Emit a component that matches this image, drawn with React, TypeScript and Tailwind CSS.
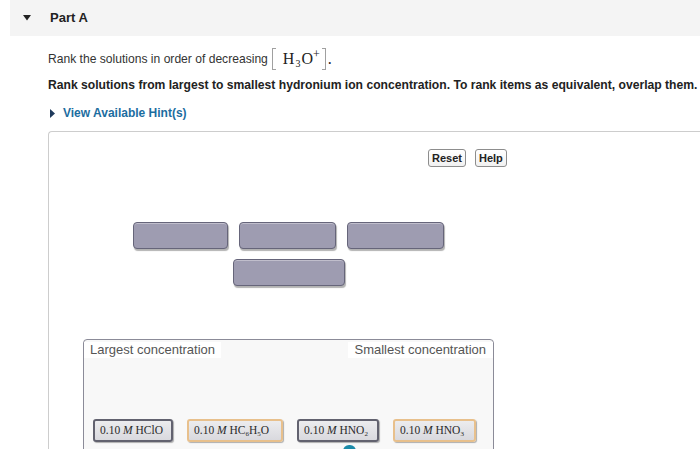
import React from "react";

type Item = { label: React.ReactNode; width: string; tan?: boolean };

const sans = "font-['Liberation_Sans',Arial,sans-serif]";
const serif = "font-['Liberation_Serif','Times_New_Roman',serif]";

function Conc({ formula }: { formula: React.ReactNode }) {
  return (
    <span>
      0.10 <i>M</i> {formula}
    </span>
  );
}

const items: Item[] = [
  { label: <Conc formula="HClO" />, width: "w-[80px]" },
  {
    label: (
      <Conc
        formula={
          <>
            HC<sub className="text-[7px]">6</sub>H<sub className="text-[7px]">5</sub>O
          </>
        }
      />
    ),
    width: "w-[96px]",
    tan: true,
  },
  {
    label: (
      <Conc
        formula={
          <>
            HNO<sub className="text-[7px]">2</sub>
          </>
        }
      />
    ),
    width: "w-[82px]",
  },
  {
    label: (
      <Conc
        formula={
          <>
            HNO<sub className="text-[7px]">3</sub>
          </>
        }
      />
    ),
    width: "w-[83px]",
    tan: true,
  },
];

// empty slot on the drag canvas
function Slot({ className }: { className: string }) {
  return (
    <div
      className={`h-[27px] rounded-[4px] border border-[#66657a] bg-[#9e9cb1] shadow-[1px_2px_1px_rgba(0,0,0,0.3),inset_0_1px_0_rgba(255,255,255,0.35)] ${className}`}
    />
  );
}

function ToolButton({ children }: { children: React.ReactNode }) {
  return (
    <button className="h-[18px] rounded-[3px] border border-[#8d8d8d] bg-gradient-to-b from-white to-[#f1f1f1] px-[3px] text-[11px] leading-none font-bold text-[#222]">
      {children}
    </button>
  );
}

export default function App() {
  return (
    <div className={`min-h-screen overflow-hidden bg-white text-[#333] ${sans}`}>
      {/* Part header */}
      <div className="ml-[10px] flex h-9 items-center bg-[#f4f4f4]">
        <svg width="8" height="6" viewBox="0 0 8 6" className="ml-[13px]">
          <path d="M0 0 H8 L4 5.5 Z" fill="#222" />
        </svg>
        <span className="ml-[19px] text-[13px] font-bold text-[#222]">Part A</span>
      </div>

      <div className="pl-12">
        {/* question stem */}
        <div className="mt-[10px] flex h-[26px] items-center text-[12.1px]">
          <span>Rank the solutions in order of decreasing</span>
          <span className={`ml-[4px] flex items-center text-[16px] text-[#222] ${serif}`}>
            <span className="inline-block h-[22px] w-[4px] border-[1.5px] border-r-0 border-[#a0a0a0]" />
            <span className="ml-[7px]">H</span>
            <span className="relative top-[4px] ml-[1px] text-[10px]">3</span>
            <span className="ml-[1px]">O</span>
            <span className="relative -top-[5px] text-[12px]">+</span>
            <span className="ml-[2px] inline-block h-[22px] w-[4px] border-[1.5px] border-l-0 border-[#a0a0a0]" />
            <span className="ml-[2px]">.</span>
          </span>
        </div>
        <div className="mt-[5px] whitespace-nowrap text-[12.15px] leading-4 font-bold text-[#222]">
          Rank solutions from largest to smallest hydronium ion concentration. To rank items as equivalent, overlap them.
        </div>
        <div className="mt-[12px] flex h-4 items-center">
          <svg width="5" height="9" viewBox="0 0 5 9" className="ml-[2px]">
            <path d="M0 0 L5 4.5 L0 9 Z" fill="#1f3a5c" />
          </svg>
          <span className="ml-[8px] text-[12px] font-bold text-[#1c6d9f]">View Available Hint(s)</span>
        </div>

        {/* ranking panel */}
        <div className="mt-[10px] h-[400px] rounded-tl-[4px] border-t border-l border-[#cdcdcd]">
          <div className="ml-[379px] flex gap-[9px] pt-[17px]">
            <ToolButton>Reset</ToolButton>
            <ToolButton>Help</ToolButton>
          </div>

          <div className="mt-[55px] ml-[84px] flex gap-[11px]">
            <Slot className="w-[95px]" />
            <Slot className="w-[97px]" />
            <Slot className="w-[97px]" />
          </div>
          <div className="mt-[10px] ml-[184px] flex">
            <Slot className="w-[112px]" />
          </div>

          <div className="relative mt-[53px] ml-[34px] h-[130px] w-[411px] rounded-t-[4px] border border-[#8b8b98] bg-[#f8f8f8]">
            <div className="flex justify-between pt-[2px] text-[13px] leading-4 text-[#555]">
              <span className="bg-white pr-[6px] pl-[6px]">Largest concentration</span>
              <span className="bg-white pr-[7px] pl-[6px]">Smallest concentration</span>
            </div>
            <div className="mt-[61px] ml-[9px] flex gap-[14px]">
              {items.map((it, i) => (
                <div
                  key={i}
                  className={`flex h-[23px] items-center rounded-[3px] border-2 bg-gradient-to-b from-[#ececee] to-[#d9d9de] pl-[5px] text-[11.5px] leading-none whitespace-nowrap text-[#2a2a2a] shadow-[1px_1px_1px_rgba(0,0,0,0.3)] ${it.width} ${serif} ${
                    it.tan ? "border-[#e8c08c]" : "border-[#62626f]"
                  }`}
                >
                  {it.label}
                </div>
              ))}
            </div>
            <div className="absolute top-[105px] left-[259px] h-[12px] w-[13px] rounded-full bg-[#1b8aa8]" />
          </div>
        </div>
      </div>
    </div>
  );
}
